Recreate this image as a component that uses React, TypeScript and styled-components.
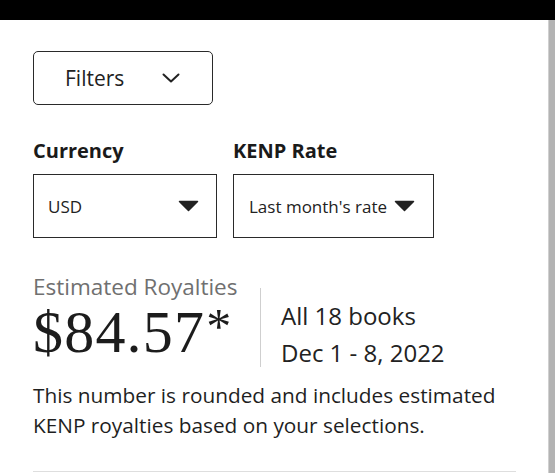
import React from 'react';
import styled, { createGlobalStyle } from 'styled-components';

const GlobalStyle = createGlobalStyle`
  html, body {
    margin: 0;
    padding: 0;
    background: #fff;
    font-family: "Open Sans", "Noto Sans", sans-serif;
    color: #1f1f1f;
  }
`;

const TopBar = styled.div`
  height: 20px;
  background: #000;
`;

const Frame = styled.div`
  display: flex;
  height: 453px;
  overflow: hidden;
`;

const Main = styled.main`
  flex: 1;
  padding: 31px 32px 0 33px;
`;

const ScrollTrack = styled.div`
  width: 6px;
  background: #b3b3b3;
  border-left: 1px solid #d0d0d0;
`;

const FilterButton = styled.button`
  display: flex;
  align-items: center;
  justify-content: space-between;
  box-sizing: border-box;
  width: 180px;
  height: 54px;
  padding: 0 32px 0 31px;
  border: 1.5px solid #2a2a2a;
  border-radius: 5px;
  background: #fff;
  font-family: inherit;
  font-size: 21px;
  color: #222;
  cursor: pointer;
`;

const SelectRow = styled.div`
  display: flex;
  gap: 16px;
  margin-top: 34px;
`;

const Field = styled.div`
  display: flex;
  flex-direction: column;
`;

const Label = styled.div`
  font-size: 20px;
  font-weight: 700;
  line-height: 24px;
  margin-bottom: 11px;
  color: #1a1a1a;
`;

const SelectBox = styled.div<{ w: number; pl: number; pr: number }>`
  display: flex;
  align-items: center;
  justify-content: space-between;
  box-sizing: border-box;
  width: ${({ w }) => w}px;
  height: 64px;
  padding: 0 ${({ pr }) => pr}px 0 ${({ pl }) => pl}px;
  border: 1.5px solid #2a2a2a;
  font-size: 17px;
  color: #222;
  white-space: nowrap;
`;

const Summary = styled.div`
  display: flex;
  align-items: flex-start;
  margin-top: 36px;
`;

const Totals = styled.div`
  display: flex;
  flex-direction: column;
  width: 206px;
  white-space: nowrap;
`;

const Caption = styled.div`
  font-size: 22.5px;
  line-height: 26px;
  color: #707070;
`;

const Amount = styled.div`
  font-family: "Liberation Serif", "DejaVu Serif", serif;
  font-size: 60px;
  line-height: 56px;
  margin-top: 4px;
  color: #1c1c1c;
  letter-spacing: 1.2px;

  sup {
    font-size: 50px;
    line-height: 0;
    vertical-align: top;
    position: relative;
    top: 22px;
    margin-left: 1px;
  }
`;

const Divider = styled.div`
  width: 1px;
  height: 79px;
  margin: 14px 20px 0 21px;
  background: #cfcfcf;
`;

const Scope = styled.div`
  font-size: 24px;
  line-height: 37px;
  margin-top: 23px;
  color: #222;
  white-space: nowrap;
`;

const Note = styled.p`
  margin: 9px 0 0;
  font-size: 20.8px;
  line-height: 30px;
  color: #1f1f1f;
`;

const Rule = styled.hr`
  margin: 31px 0 0;
  border: none;
  border-top: 1px solid #dedede;
`;

const Chevron = () => (
  <svg width="18" height="10" viewBox="0 0 18 10">
    <polyline points="1.5,1.5 9,8.5 16.5,1.5" fill="none" stroke="#222" strokeWidth="2" strokeLinecap="round" strokeLinejoin="round" />
  </svg>
);

const Caret = () => (
  <svg width="21" height="12" viewBox="0 0 21 12">
    <path d="M1.5 1.5 H19.5 L10.5 10.5 Z" fill="#222" stroke="#222" strokeWidth="1.5" strokeLinejoin="round" />
  </svg>
);

const App: React.FC = () => {
  return (
    <>
      <GlobalStyle />
      <TopBar />
      <Frame>
        <Main>
          <FilterButton>
            <span>Filters</span>
            <Chevron />
          </FilterButton>

          <SelectRow>
            <Field>
              <Label>Currency</Label>
              <SelectBox w={184} pl={14} pr={17}>
                <span>USD</span>
                <Caret />
              </SelectBox>
            </Field>
            <Field>
              <Label>KENP Rate</Label>
              <SelectBox w={201} pl={15} pr={18}>
                <span>Last month's rate</span>
                <Caret />
              </SelectBox>
            </Field>
          </SelectRow>

          <Summary>
            <Totals>
              <Caption>Estimated Royalties</Caption>
              <Amount>
                $84.57<sup>*</sup>
              </Amount>
            </Totals>
            <Divider />
            <Scope>
              All 18 books
              <br />
              Dec 1 - 8, 2022
            </Scope>
          </Summary>

          <Note>
            This number is rounded and includes estimated KENP royalties based on your selections.
          </Note>
          <Rule />
        </Main>
        <ScrollTrack />
      </Frame>
    </>
  );
};

export default App;
